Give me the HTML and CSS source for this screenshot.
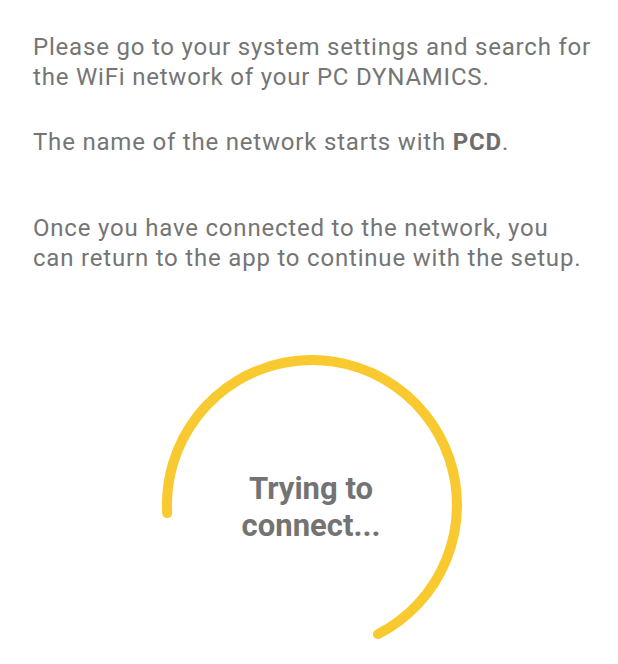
FILE: index.html
```html
<!DOCTYPE html>
<html>
<head>
<meta charset="utf-8">
<link rel="stylesheet" href="styles.css">
</head>
<body>
<main class="page">
  <p class="para p1">Please go to your system settings and search for the WiFi network of your PC DYNAMICS.</p>
  <p class="para p2">The name of the network starts with <b>PCD</b>.</p>
  <p class="para p3">Once you have connected to the network, you can return to the app to continue with the setup.</p>
  <div class="spinner">
    <svg class="arc" width="300" height="300" viewBox="0 0 300 300">
      <path d="M5.2 158.1 A145 145 0 1 1 216 279.1" fill="none" stroke="#F9CA30" stroke-width="10" stroke-linecap="round"/>
    </svg>
    <div class="status">Trying to<br>connect...</div>
  </div>
</main>
</body>
</html>
```
FILE: styles.css
```css
html, body {
  margin: 0;
  background: #ffffff;
}
.page {
  padding: 32px 25px 0 33px;
  font-family: Roboto, "Noto Sans", sans-serif;
  color: #757575;
}
.para {
  margin: 0;
  font-size: 24px;
  line-height: 30px;
  letter-spacing: 0.8px;
}
.para b {
  font-weight: 700;
  color: #6e6e6e;
}
.p2 {
  margin-top: 35px;
}
.p3 {
  margin-top: 56px;
}
.spinner {
  display: grid;
  width: 300px;
  height: 300px;
  margin: 82px 0 0 129px;
}
.arc, .status {
  grid-area: 1 / 1;
}
.status {
  align-self: center;
  justify-self: center;
  text-align: center;
  font-weight: 700;
  font-size: 31px;
  line-height: 37px;
  color: #737373;
  margin-left: -2px;
  margin-top: 4px;
}
```
